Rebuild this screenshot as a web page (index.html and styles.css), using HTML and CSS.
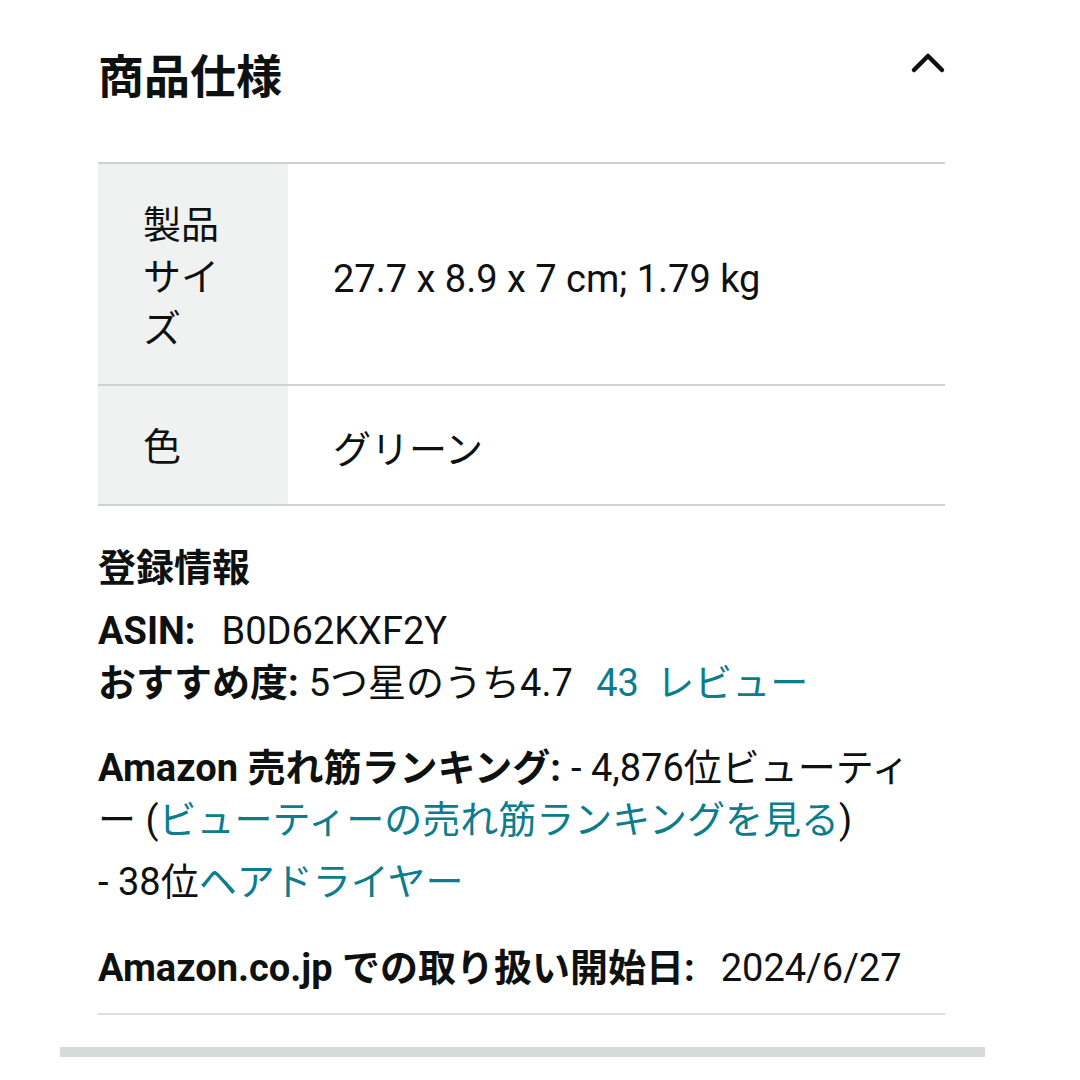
FILE: index.html
```html
<!DOCTYPE html>
<html lang="ja">
<head>
    <meta charset="UTF-8">
    <link rel="stylesheet" href="styles.css">
</head>
<body>
    <div class="spec-page">
        <div class="spec-header">
            <h2 class="spec-title">商品仕様</h2>
            <svg class="spec-toggle" width="36" height="24" viewBox="0 0 36 24">
                <polyline points="4,20 18,6 32,20" fill="none" stroke="#0f1111" stroke-width="4.5" stroke-linecap="round" stroke-linejoin="round"/>
            </svg>
        </div>

        <table class="spec-table">
            <tr>
                <th>製品サイズ</th>
                <td>27.7 x 8.9 x 7 cm; 1.79 kg</td>
            </tr>
            <tr>
                <th>色</th>
                <td>グリーン</td>
            </tr>
        </table>

        <div class="detail-section">
            <h3 class="detail-title">登録情報</h3>
            <div class="detail-line first">
                <span class="detail-label wide">ASIN:</span>B0D62KXF2Y
            </div>
            <div class="detail-line">
                <span class="detail-label">おすすめ度:</span>5つ星のうち4.7 <a class="detail-link review-link" href="#">43 レビュー</a>
            </div>
            <div class="detail-line ranking">
                <span class="detail-label">Amazon 売れ筋ランキング:</span>- 4,876位ビューティー (<a class="detail-link" href="#">ビューティーの売れ筋ランキングを見る</a>)
            </div>
            <div class="detail-line sub-rank">
                - 38位<a class="detail-link" href="#">ヘアドライヤー</a>
            </div>
            <div class="detail-line release">
                <span class="detail-label wide">Amazon.co.jp での取り扱い開始日:</span>2024/6/27
            </div>
        </div>

        <hr class="detail-divider">
    </div>
    <div class="section-bar"></div>
</body>
</html>
```

FILE: styles.css
```css
body {
    margin: 0;
    background: #ffffff;
    color: #0f1111;
    font-family: Roboto, "Noto Sans CJK JP", sans-serif;
}
.spec-page {
    width: 847px;
    margin-left: 98px;
    padding-top: 47px;
}
.spec-header {
    display: flex;
    justify-content: space-between;
    align-items: flex-start;
}
.spec-title {
    margin: 0;
    font-size: 46px;
    line-height: 60px;
    font-weight: 700;
}
.spec-toggle {
    margin-top: 3px;
    margin-right: -1px;
}
.spec-table {
    width: 100%;
    margin-top: 55px;
    border-collapse: collapse;
    border-top: 2px solid #cfd2d2;
    font-size: 38px;
    line-height: 52px;
}
.spec-table tr {
    border-bottom: 2px solid #cfd2d2;
}
.spec-table th {
    width: 100px;
    padding: 35px 45px 29px;
    background: #f0f2f2;
    text-align: left;
    font-weight: 400;
    vertical-align: top;
}
.spec-table tr:last-child th {
    padding-bottom: 31px;
}
.spec-table td {
    padding: 9px 45px 0;
    vertical-align: middle;
}
.detail-section {
    margin-top: 36px;
    font-size: 38px;
    line-height: 52px;
    line-break: normal;
}
.detail-title {
    margin: 0;
    font-size: 38px;
    line-height: 52px;
    font-weight: 700;
}
.detail-line.first {
    margin-top: 11px;
}
.detail-line.ranking {
    margin-top: 33px;
}
.detail-line.sub-rank {
    margin-top: 10px;
}
.detail-line.release {
    margin-top: 34px;
}
.detail-label {
    font-weight: 700;
    margin-right: 10px;
}
.detail-label.wide {
    margin-right: 26px;
}
.detail-link {
    color: #0b7d8c;
    text-decoration: none;
}
.review-link {
    margin-left: 14px;
    word-spacing: 8px;
}
.detail-divider {
    margin: 19px 0 0;
    border: none;
    border-top: 2px solid #dcdede;
}
.section-bar {
    width: 925px;
    height: 10px;
    margin: 32px 0 0 60px;
    background: #d5d9d9;
}
```
